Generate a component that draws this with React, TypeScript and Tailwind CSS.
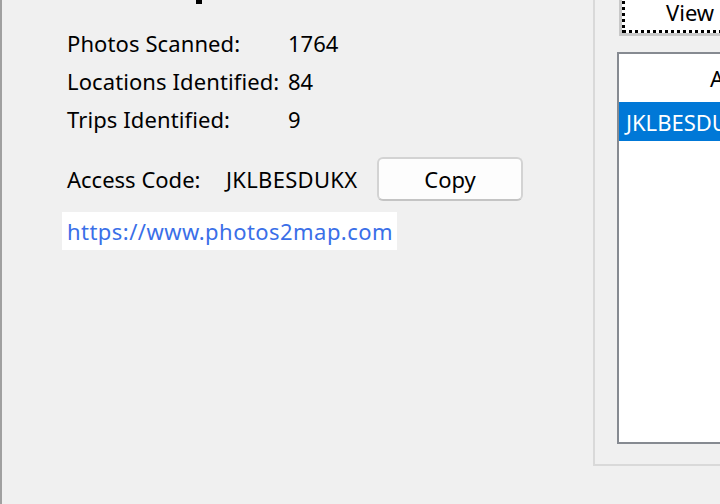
import React from 'react';

const stats = [
  { label: 'Photos Scanned:', value: '1764' },
  { label: 'Locations Identified:', value: '84' },
  { label: 'Trips Identified:', value: '9' },
];

export default function App() {
  return (
    <div
      className="w-[720px] h-[504px] bg-[#f0f0f0] flex overflow-hidden text-[22px] text-black"
      style={{ fontFamily: '"Noto Sans", "Open Sans", sans-serif' }}
    >
      {/* Left summary panel */}
      <div className="w-[593px] shrink-0 border-l-2 border-[#a0a0a0] flex flex-col">
        {/* bottom of the cut-off heading */}
        <div className="ml-[194px] w-[6px] h-[4px] bg-black" />

        <div className="pl-[65px] pt-[20px]">
          {stats.map((s) => (
            <div key={s.label} className="flex items-center h-[38px] leading-none">
              <span className="w-[221px] shrink-0 tracking-[0.1px]">{s.label}</span>
              <span>{s.value}</span>
            </div>
          ))}

          {/* Access code row */}
          <div className="flex items-center mt-[19px] h-[44px] leading-none">
            <span className="w-[159px] shrink-0">Access Code:</span>
            <span className="w-[151px] shrink-0 tracking-[0.3px]">JKLBESDUKX</span>
            <button className="w-[146px] h-[44px] bg-[#fdfdfd] border-2 border-[#d3d3d3] border-b-[#c4c4c4] rounded-[6px] leading-none">
              Copy
            </button>
          </div>

          {/* Link */}
          <div className="mt-[11px] -ml-[5px] w-[335px] h-[38px] bg-white flex items-center pl-[5px] leading-none text-[#3a6fe8] tracking-[0.45px]">
            https://www.photos2map.com
          </div>
        </div>
      </div>

      {/* Right panel */}
      <div className="flex-1 h-[466px] border-l-2 border-b-2 border-[#d9d9d9] flex flex-col pl-[22px] pb-[20px]">
        {/* View button (top cut off) */}
        <div className="ml-[2px] -mt-[10px] h-[46px] border-l-[3px] border-b-[3px] border-[#c8c8c8] bg-white">
          <div className="h-full border-l-[3px] border-b-[3px] border-dotted border-black flex items-end pb-[7px] pl-[41px] leading-none">
            View
          </div>
        </div>

        {/* List view */}
        <div className="mt-[16px] flex-1 border-2 border-r-0 border-[#868a91] bg-white flex flex-col overflow-hidden">
          <div className="h-[48px] shrink-0 flex items-center pl-[91px] leading-none whitespace-nowrap">
            Access Code
          </div>
          <div className="h-[39px] shrink-0 bg-[#0078d7] text-white flex items-center pl-[7px] leading-none whitespace-nowrap">
            JKLBESDUKX
          </div>
        </div>
      </div>
    </div>
  );
}
